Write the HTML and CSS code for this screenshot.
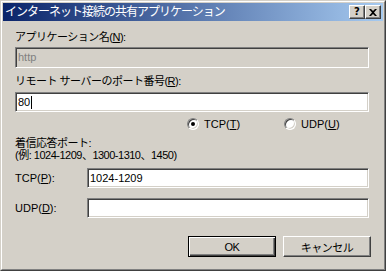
FILE: index.html
```html
<!DOCTYPE html>
<html lang="ja">
<head>
    <meta charset="UTF-8">
    <title>インターネット接続の共有アプリケーション</title>
    <link rel="stylesheet" href="styles.css">
</head>
<body>
    <div class="window">
        <div class="frame">
            <div class="titlebar">
                <span class="title">インターネット接続の共有アプリケーション</span>
                <div class="caption-btns">
                    <span class="cap-btn help">?</span>
                    <span class="cap-btn close">
                        <svg width="8" height="7" viewBox="0 0 8 7">
                            <path d="M0 0h2l2 2 2-2h2L5 3.5 8 7H6L4 5 2 7H0l3-3.5z" fill="#000"/>
                        </svg>
                    </span>
                </div>
            </div>

            <div class="content">
                <div class="label first">アプリケーション名(<u>N</u>):</div>
                <div class="textbox disabled">http</div>

                <div class="label second">リモート サーバーのポート番号(<u>R</u>):</div>
                <div class="textbox tall-20">80<span class="caret"></span></div>

                <div class="radio-row">
                    <label class="radio-item tcp">
                        <span class="radio checked"></span>
                        <span>TCP(<u>T</u>)</span>
                    </label>
                    <label class="radio-item udp">
                        <span class="radio"></span>
                        <span>UDP(<u>U</u>)</span>
                    </label>
                </div>

                <div class="label note">
                    着信応答ポート:<br>
                    (例: 1024-1209、1300-1310、1450)
                </div>

                <div class="port-row tcp">
                    <span class="port-label">TCP(<u>P</u>):</span>
                    <div class="textbox tall-20">1024-1209</div>
                </div>
                <div class="port-row udp">
                    <span class="port-label">UDP(<u>D</u>):</span>
                    <div class="textbox tall-20"></div>
                </div>

                <div class="button-row">
                    <button class="btn default">OK</button>
                    <button class="btn">キャンセル</button>
                </div>
            </div>
        </div>
    </div>
</body>
</html>
```

FILE: styles.css
```css
* {
    margin: 0;
    padding: 0;
    box-sizing: border-box;
}

body {
    background: #d4d0c8;
    font-family: "Liberation Sans", "Noto Sans CJK JP", sans-serif;
    font-size: 11px;
    color: #000;
}

/* ウィンドウ枠 */
.window {
    width: 386px;
    height: 271px;
    border: 1px solid;
    border-color: #d4d0c8 #404040 #404040 #d4d0c8;
    background: #d4d0c8;
}

.frame {
    height: 100%;
    border: 1px solid;
    border-color: #fff #808080 #808080 #fff;
    padding: 1px;
}

/* タイトルバー */
.titlebar {
    height: 18px;
    display: flex;
    align-items: center;
    justify-content: space-between;
    padding: 0 2px 0 2px;
    background: linear-gradient(90deg, #0a246a 0%, #a6caf0 100%);
}

.title {
    color: #fff;
    font-size: 12px;
    letter-spacing: -1px;
    line-height: 18px;
    white-space: nowrap;
}

.caption-btns {
    display: flex;
}

.cap-btn {
    width: 16px;
    height: 14px;
    background: #d4d0c8;
    border: 1px solid;
    border-color: #fff #404040 #404040 #fff;
    box-shadow: inset -1px -1px #808080;
    display: flex;
    align-items: center;
    justify-content: center;
    font-family: "DejaVu Sans", sans-serif;
    font-size: 10px;
    font-weight: bold;
    line-height: 1;
}

/* 本体 */
.content {
    padding: 0 12px;
}

.label {
    line-height: 14px;
    height: 14px;
    white-space: nowrap;
    letter-spacing: -0.5px;
}

.label.first {
    margin-top: 9px;
}

.label.second {
    margin-top: 6px;
}

.label.note {
    margin-top: 5px;
    height: 26px;
    line-height: 12px;
}

.textbox {
    height: 21px;
    margin-top: 3px;
    margin-right: 2px;
    padding: 2px;
    background: #fff;
    border: 1px solid;
    border-color: #808080 #fff #fff #808080;
    box-shadow: inset 1px 1px #404040, inset -1px -1px #d4d0c8;
    line-height: 15px;
    display: flex;
    align-items: center;
}

.textbox.tall-20 {
    height: 20px;
    margin-top: 4px;
}

.textbox.disabled {
    background: #d4d0c8;
    color: #808080;
}

.caret {
    width: 1px;
    height: 13px;
    margin-left: 1px;
    background: #000;
}

/* ラジオボタン */
.radio-row {
    display: flex;
    height: 16px;
    margin-top: 4px;
    padding-left: 172px;
}

.radio-item {
    display: flex;
    align-items: center;
    gap: 5px;
    line-height: 16px;
}

.radio-item.udp {
    margin-left: 44px;
}

.radio {
    width: 12px;
    height: 12px;
    border-radius: 50%;
    border: 1px solid;
    border-color: #808080 #fff #fff #808080;
    box-shadow: inset 1px 1px #404040, inset -1px -1px #d4d0c8;
    background: #fff;
    position: relative;
}

.radio.checked::after {
    content: "";
    position: absolute;
    left: 3px;
    top: 3px;
    width: 4px;
    height: 4px;
    border-radius: 50%;
    background: #000;
}

/* ポート入力 */
.port-row {
    display: grid;
    grid-template-columns: 72px 1fr;
    align-items: center;
}

.port-row .textbox {
    margin-top: 0;
}

.port-row.tcp {
    margin-top: 5px;
}

.port-row.udp {
    margin-top: 10px;
}

/* ボタン */
.button-row {
    display: flex;
    justify-content: flex-end;
    gap: 7px;
    margin-top: 18px;
}

.btn {
    width: 88px;
    height: 21px;
    background: #d4d0c8;
    border: 1px solid;
    border-color: #fff #404040 #404040 #fff;
    box-shadow: inset -1px -1px #808080;
    font-family: inherit;
    font-size: 11px;
    color: #000;
    letter-spacing: -0.5px;
}

.btn.default {
    border: 1px solid #000;
    box-shadow: inset 1px 1px #fff, inset -1px -1px #404040, inset -2px -2px #808080;
}
```
